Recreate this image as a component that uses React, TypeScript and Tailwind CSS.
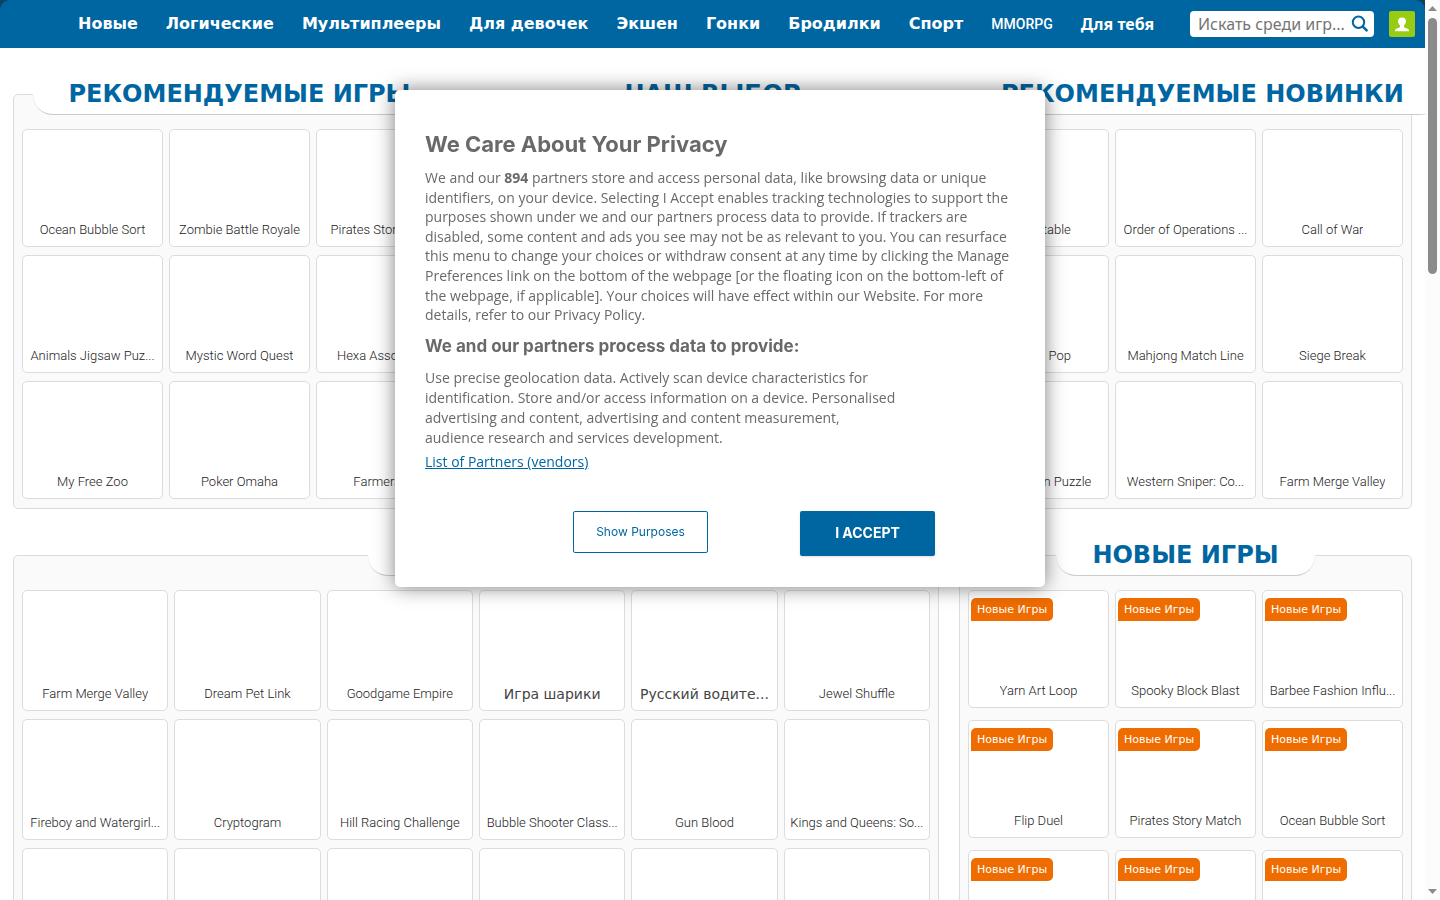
import clsx from "clsx";

const NAV_ITEMS = [
    "Новые",
    "Логические",
    "Мультиплееры",
    "Для девочек",
    "Экшен",
    "Гонки",
    "Бродилки",
    "Спорт",
];

const RECOMMENDED = [
    "Ocean Bubble Sort", "Zombie Battle Royale", "Pirates Story Match",
    "Animals Jigsaw Puz...", "Mystic Word Quest", "Hexa Association",
    "My Free Zoo", "Poker Omaha", "Farmerama",
];

const OUR_CHOICE = Array<string>(9).fill("");

const NEW_RECOMMENDED = [
    "Unbeatable", "Order of Operations ...", "Call of War",
    "Bubble Pop", "Mahjong Match Line", "Siege Break",
    "Connection Puzzle", "Western Sniper: Co...", "Farm Merge Valley",
];

const TOP_GAMES = [
    "Farm Merge Valley", "Dream Pet Link", "Goodgame Empire", "Игра шарики", "Русский водите...", "Jewel Shuffle",
    "Fireboy and Watergirl...", "Cryptogram", "Hill Racing Challenge", "Bubble Shooter Class...", "Gun Blood", "Kings and Queens: So...",
    "", "", "", "", "", "",
];

const NEW_GAMES = [
    "Yarn Art Loop", "Spooky Block Blast", "Barbee Fashion Influ...",
    "Flip Duel", "Pirates Story Match", "Ocean Bubble Sort",
    "", "", "",
];

function SearchIcon() {
    return (
        <svg width="18" height="18" viewBox="0 0 18 18" fill="none" stroke="#0066a1" aria-hidden="true">
            <circle cx="7.5" cy="7.3" r="5.7" strokeWidth="2" />
            <path d="M11.6 11.4l4.8 4.8" strokeWidth="2.4" />
        </svg>
    );
}

function UserIcon() {
    return (
        <svg width="14" height="15" viewBox="0 0 14 15" fill="#fff" aria-hidden="true">
            <path d="M7 .5C4.500.5 3 2 3 4.300c0 1.600.8 3.200 2 4.200v1.200c0 .5-.2.8-.8 1L1.300 11.800C.4 12.200 0 12.900 0 14.300h14c0-1.400-.4-2.100-1.300-2.500L9.800 10.700c-.6-.2-.8-.5-.8-1V8.500c1.200-1 2-2.600 2-4.200C11 2 9.500.5 7 .5z" />
        </svg>
    );
}

function Header() {
    return (
        <div className="bg-[#0d4266]">
            <header className="flex h-12 items-center rounded-t-[10px] bg-[#0066a1] pr-[10px] pl-[78px]">
                <nav className="flex flex-1 items-center gap-7 text-base font-bold whitespace-nowrap text-white">
                    {NAV_ITEMS.map((item) => (
                        <a key={item} href="#">{item}</a>
                    ))}
                    <a href="#" className="font-['Roboto'] text-sm font-medium">MMORPG</a>
                    <a href="#" className="font-['Noto_Sans']">Для тебя</a>
                </nav>
                <form className="flex h-[26px] w-[184px] shrink-0 items-center rounded-sm bg-white pr-[5px] pl-2">
                    <input
                        type="text"
                        aria-label="Искать среди игр"
                        placeholder="Искать среди игр..."
                        className="min-w-0 flex-1 font-['Noto_Sans'] text-base text-gray-600 outline-none placeholder:text-[#757575]"
                    />
                    <button type="button" aria-label="Искать"><SearchIcon /></button>
                </form>
                <button
                    type="button"
                    aria-label="Профиль"
                    className="ml-[15px] flex size-[26px] shrink-0 items-center justify-center rounded-xs bg-[#97cc10]"
                >
                    <UserIcon />
                </button>
            </header>
        </div>
    );
}

function Tile({ name, badge, tall }: { name: string; badge?: boolean; tall?: boolean }) {
    const cyrillic = /[а-я]/i.test(name);

    return (
        <a
            href="#"
            className={clsx(
                "relative flex min-w-0 items-end justify-center rounded-[5px] border border-[#dcdcdc] bg-white px-1 pb-[7px]",
                tall ? "h-[121px]" : "h-[118px]",
            )}
        >
            {badge && (
                <span className="absolute top-[7px] left-[2px] rounded-[5px] rounded-bl-none bg-[#ef6c00] px-[6px] text-[11px] leading-[23px] whitespace-nowrap text-white">
                    Новые Игры
                </span>
            )}
            <span
                className={clsx(
                    "truncate leading-[18px]",
                    cyrillic ? "text-sm text-[#444]" : "font-['Roboto',sans-serif] text-[13px] font-light text-[#222]",
                )}
            >
                {name}
            </span>
        </a>
    );
}

type PanelProps = {
    title: string;
    games: string[];
    wide?: boolean;
    badges?: boolean;
};

function Panel({ title, games, wide, badges }: PanelProps) {
    return (
        <section className={clsx("min-w-0 rounded-[5px] border border-[#dcdcdc] bg-[#fafafa]", wide && "col-span-2")}>
            <div className="-mt-[22px] px-[5px] text-center">
                <h2 className="inline-block h-[42px] rounded-b-[20px] border-b border-[#ccc] bg-white px-9 align-top text-2xl leading-[42px] font-bold whitespace-nowrap text-[#0066a1]">
                    {title}
                </h2>
            </div>
            <div
                className={clsx(
                    "grid gap-x-[6px] px-2 pt-[14px] pb-[9px]",
                    wide ? "grid-cols-6" : "grid-cols-3",
                    badges ? "gap-y-3" : "gap-y-2",
                )}
            >
                {games.map((game, i) => (
                    <Tile key={i} name={game} badge={badges} tall={wide} />
                ))}
            </div>
        </section>
    );
}

function PrivacyDialog() {
    return (
        <div
            role="dialog"
            aria-labelledby="privacy-title"
            className="fixed top-[10%] left-1/2 w-[650px] max-w-full -translate-x-1/2 rounded-[5px] bg-white px-[30px] pt-10 pb-[31px] font-['Open_Sans',sans-serif] text-sm text-[#696969] shadow-[0_0_20px_rgba(0,0,0,0.5)]"
        >
            <h2 id="privacy-title" className="font-['Inter'] text-[22px] leading-7 font-bold">We Care About Your Privacy</h2>
            <p className="mt-[10px] leading-[1.4] whitespace-nowrap">
                We and our <b>894</b> partners store and access personal data, like browsing data or unique<br />
                identifiers, on your device. Selecting I Accept enables tracking technologies to support the<br />
                purposes shown under we and our partners process data to provide. If trackers are<br />
                disabled, some content and ads you see may not be as relevant to you. You can resurface<br />
                this menu to change your choices or withdraw consent at any time by clicking the Manage<br />
                Preferences link on the bottom of the webpage [or the floating icon on the bottom-left of<br />
                the webpage, if applicable]. Your choices will have effect within our Website. For more<br />
                details, refer to our Privacy Policy.
            </p>
            <h3 className="mt-[9px] font-['Inter'] text-[17px] leading-6 font-bold">We and our partners process data to provide:</h3>
            <p className="mt-[10px] leading-5">
                Use precise geolocation data. Actively scan device characteristics for<br />
                identification. Store and/or access information on a device. Personalised<br />
                advertising and content, advertising and content measurement,<br />
                audience research and services development.
            </p>
            <a href="#" className="mt-1 block w-fit leading-5 text-[#0066a1] underline">List of Partners (vendors)</a>
            <div className="mt-[39px] flex items-start justify-end gap-[92px] pr-20">
                <button type="button" className="h-[42px] w-[135px] rounded-xs border border-[#0066a1] font-['Inter'] text-xs text-[#0066a1]">
                    Show Purposes
                </button>
                <button type="button" className="h-[45px] w-[135px] rounded-xs bg-[#0066a1] font-['Inter'] text-sm font-bold text-white shadow-sm">
                    I ACCEPT
                </button>
            </div>
        </div>
    );
}

function Scrollbar() {
    return (
        <div className="flex w-[15px] shrink-0 flex-col items-center bg-[#fcfcfc] py-[6px]" aria-hidden="true">
            <svg width="9" height="5" viewBox="0 0 9 5" fill="#8b8b8b"><path d="M4.500 0L9 5H0z" /></svg>
            <div className="mt-[7px] h-64 w-[9px] rounded-full bg-[#8b8b8b]" />
            <svg className="mt-auto" width="9" height="5" viewBox="0 0 9 5" fill="#8b8b8b"><path d="M4.500 5L9 0H0z" /></svg>
        </div>
    );
}

export default function App() {
    return (
        <div className="flex h-screen overflow-hidden bg-white font-['DejaVu_Sans',sans-serif]">
            <div className="min-w-0 flex-1 overflow-hidden">
                <Header />
                <main className="grid grid-cols-3 gap-x-5 gap-y-[46px] px-[13px] pt-[46px]">
                    <Panel title="РЕКОМЕНДУЕМЫЕ ИГРЫ" games={RECOMMENDED} />
                    <Panel title="НАШ ВЫБОР" games={OUR_CHOICE} />
                    <Panel title="РЕКОМЕНДУЕМЫЕ НОВИНКИ" games={NEW_RECOMMENDED} />
                    <Panel title="ТОП ИГРЫ" games={TOP_GAMES} wide />
                    <Panel title="НОВЫЕ ИГРЫ" games={NEW_GAMES} badges />
                </main>
            </div>
            <Scrollbar />
            <PrivacyDialog />
        </div>
    );
}
